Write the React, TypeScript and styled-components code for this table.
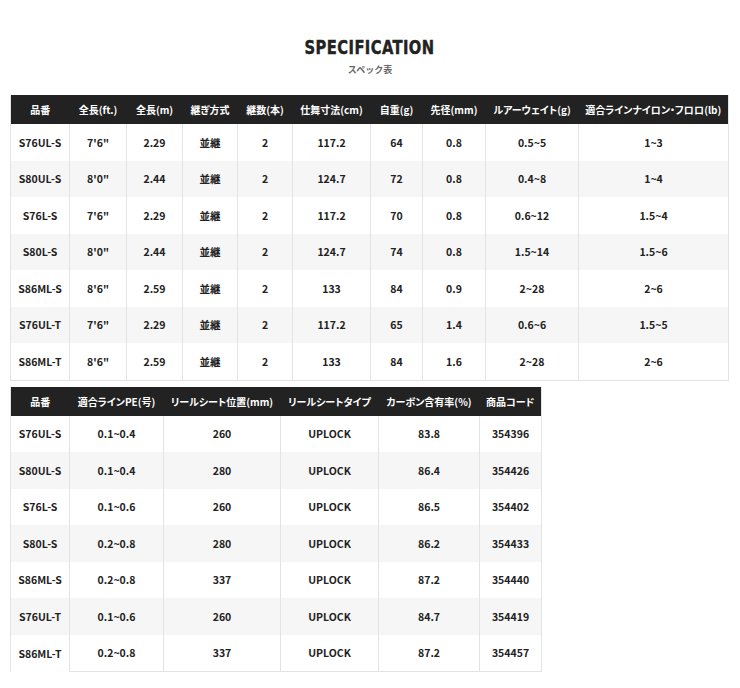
import React from "react";
import styled, { createGlobalStyle } from "styled-components";

const GlobalStyle = createGlobalStyle`
    body {
        margin: 0;
        background: #fff;
        font-family: "Noto Sans CJK JP", "Noto Sans", sans-serif;
        color: #333;
    }
`;
const Page = styled.div`
    width: 740px;
    padding: 37px 0 17px 10px;
    box-sizing: border-box;
`;
const Heading = styled.div`
    display: flex;
    flex-direction: column;
    align-items: center;
    width: 720px;
    margin-bottom: 19px;
`;
const Title = styled.h1`
    margin: 0;
    font-family: "DejaVu Sans Condensed", "DejaVu Sans", sans-serif;
    font-weight: 700;
    font-size: 19px;
    line-height: 20px;
    letter-spacing: 0.5px;
    color: #222;
    -webkit-text-stroke: 0.4px #222;
    transform: scaleX(0.86);
`;
const SubTitle = styled.div`
    margin-top: 7px;
    font-size: 9px;
    line-height: 12px;
    color: #666;
    font-weight: 700;
`;
const SpecTable = styled.table<{ $width: number }>`
    width: ${p => p.$width}px;
    border-collapse: collapse;
    table-layout: fixed;
    margin-bottom: 6px;
    border-right: 1px solid #e3e3e3;
    border-left: 1px solid #e3e3e3;
    font-feature-settings: "palt";
`;
const HeadCell = styled.th`
    background: #222;
    color: #fff;
    font-size: 10px;
    font-weight: 700;
    height: 29px;
    padding: 0;
    white-space: nowrap;
    text-align: center;
`;
const Row = styled.tr`
    &:nth-child(even) td { background: #f6f6f6; }
    &:last-child td { border-bottom: 1px solid #e3e3e3; }
`;
const Cell = styled.td<{ $noBottom?: boolean }>`
    height: 36.5px;
    padding: 0;
    font-size: 10.5px;
    font-weight: 700;
    color: #222;
    text-align: center;
    white-space: nowrap;
    border-left: 1px solid #e3e3e3;
    background: #fff;
    &:first-child { border-left: none; }
    tr:last-child > && { ${p => (p.$noBottom ? "border-bottom: none !important;" : "")} }
`;

type Spec = { head: string[]; widths: number[]; rows: string[][] };

const spec1: Spec = {
    head: ["品番", "全長(ft.)", "全長(m)", "継ぎ方式", "継数(本)", "仕舞寸法(cm)", "自重(g)", "先径(mm)", "ルアーウェイト(g)", "適合ラインナイロン・フロロ(lb)"],
    widths: [59, 57, 56, 55, 55, 78, 52, 63, 93, 150],
    rows: [
        ["S76UL-S", "7'6\"", "2.29", "並継", "2", "117.2", "64", "0.8", "0.5~5", "1~3"],
        ["S80UL-S", "8'0\"", "2.44", "並継", "2", "124.7", "72", "0.8", "0.4~8", "1~4"],
        ["S76L-S", "7'6\"", "2.29", "並継", "2", "117.2", "70", "0.8", "0.6~12", "1.5~4"],
        ["S80L-S", "8'0\"", "2.44", "並継", "2", "124.7", "74", "0.8", "1.5~14", "1.5~6"],
        ["S86ML-S", "8'6\"", "2.59", "並継", "2", "133", "84", "0.9", "2~28", "2~6"],
        ["S76UL-T", "7'6\"", "2.29", "並継", "2", "117.2", "65", "1.4", "0.6~6", "1.5~5"],
        ["S86ML-T", "8'6\"", "2.59", "並継", "2", "133", "84", "1.6", "2~28", "2~6"],
    ],
};

const spec2: Spec = {
    head: ["品番", "適合ラインPE(号)", "リールシート位置(mm)", "リールシートタイプ", "カーボン含有率(%)", "商品コード"],
    widths: [59, 94, 117, 98, 101, 62],
    rows: [
        ["S76UL-S", "0.1~0.4", "260", "UPLOCK", "83.8", "354396"],
        ["S80UL-S", "0.1~0.4", "280", "UPLOCK", "86.4", "354426"],
        ["S76L-S", "0.1~0.6", "260", "UPLOCK", "86.5", "354402"],
        ["S80L-S", "0.2~0.8", "280", "UPLOCK", "86.2", "354433"],
        ["S86ML-S", "0.2~0.8", "337", "UPLOCK", "87.2", "354440"],
        ["S76UL-T", "0.1~0.6", "260", "UPLOCK", "84.7", "354419"],
        ["S86ML-T", "0.2~0.8", "337", "UPLOCK", "87.2", "354457"],
    ],
};

const Table = ({ spec, openCorner }: { spec: Spec; openCorner?: boolean }) => {
    const total = spec.widths.reduce((a, b) => a + b, 0);
    return (
        <SpecTable $width={total}>
            <colgroup>
                {spec.widths.map((w, i) => <col key={i} style={{ width: w }} />)}
            </colgroup>
            <thead>
                <tr>
                    {spec.head.map(h => <HeadCell key={h}>{h}</HeadCell>)}
                </tr>
            </thead>
            <tbody>
                {spec.rows.map(r => (
                    <Row key={r[0]}>
                        {r.map((c, i) => <Cell key={i} $noBottom={openCorner && i === 0}>{c}</Cell>)}
                    </Row>
                ))}
            </tbody>
        </SpecTable>
    );
};

const App = () => {
    return (
        <Page>
            <GlobalStyle />
            <Heading>
                <Title>SPECIFICATION</Title>
                <SubTitle>スペック表</SubTitle>
            </Heading>
            <Table spec={spec1} />
            <Table spec={spec2} openCorner />
        </Page>
    );
};
export default App;
